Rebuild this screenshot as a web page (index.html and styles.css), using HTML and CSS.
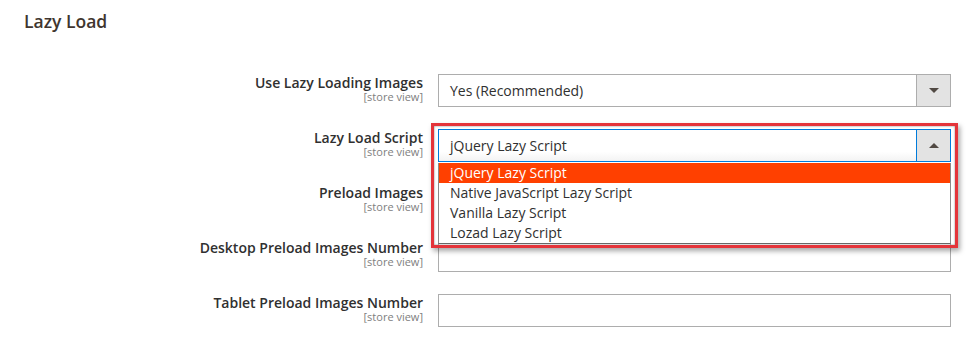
FILE: index.html
```html
<!DOCTYPE html>
<html lang="en">
<head>
  <meta charset="UTF-8">
  <title>Lazy Load</title>
  <link rel="stylesheet" href="styles.css">
</head>
<body>
  <div class="section">
    <h2 class="section-title">Lazy Load</h2>

    <div class="fields">
      <div class="field">
        <div class="label">
          <span class="name">Use Lazy Loading Images</span>
          <span class="scope">[store view]</span>
        </div>
        <div class="control">
          <div class="select">
            <span class="value">Yes (Recommended)</span>
            <span class="arrow"><i class="tri down"></i></span>
          </div>
        </div>
      </div>

      <div class="field">
        <div class="label">
          <span class="name">Lazy Load Script</span>
          <span class="scope">[store view]</span>
        </div>
        <div class="control open">
          <div class="select focus">
            <span class="value">jQuery Lazy Script</span>
            <span class="arrow"><i class="tri up"></i></span>
          </div>
          <ul class="options">
            <li class="active">jQuery Lazy Script</li>
            <li>Native JavaScript Lazy Script</li>
            <li>Vanilla Lazy Script</li>
            <li>Lozad Lazy Script</li>
          </ul>
          <div class="highlight"></div>
        </div>
      </div>

      <div class="field">
        <div class="label">
          <span class="name">Preload Images</span>
          <span class="scope">[store view]</span>
        </div>
        <div class="control">
          <!-- hidden under the open list -->
          <div class="select">
            <span class="value"></span>
            <span class="arrow"><i class="tri down"></i></span>
          </div>
        </div>
      </div>

      <div class="field">
        <div class="label">
          <span class="name">Desktop Preload Images Number</span>
          <span class="scope">[store view]</span>
        </div>
        <div class="control">
          <div class="input"></div>
        </div>
      </div>

      <div class="field">
        <div class="label">
          <span class="name">Tablet Preload Images Number</span>
          <span class="scope">[store view]</span>
        </div>
        <div class="control">
          <div class="input"></div>
        </div>
      </div>
    </div>
  </div>
</body>
</html>
```

FILE: styles.css
```css
body {
  margin: 0;
  background: #fff;
  color: #303030;
  font-family: "Open Sans", "Liberation Sans", sans-serif;
}
.section {
  padding: 10px 0 0 24px;
}
.section-title {
  margin: 0 0 41px;
  font-size: 17.5px;
  font-weight: 600;
  line-height: 23px;
  color: #41362f;
}
.field {
  display: grid;
  grid-template-columns: 399px 513px;
  column-gap: 15px;
  margin-bottom: 22px;
}
.label {
  display: flex;
  flex-direction: column;
  align-items: flex-end;
  padding-top: 1px;
  text-align: right;
}
.label .name {
  font-size: 14px;
  font-weight: 600;
  line-height: 16px;
  color: #303030;
}
.label .scope {
  font-size: 11px;
  line-height: 12px;
  color: #808080;
}
.control {
  position: relative;
}
.select,
.input {
  box-sizing: border-box;
  height: 33px;
  border: 1px solid #adadad;
  background: #fff;
}
.select {
  display: flex;
  align-items: center;
}
.select .value {
  flex: 1;
  padding-left: 11px;
  font-size: 14px;
  line-height: 19px;
}
.select .arrow {
  width: 33px;
  height: 100%;
  border-left: 1px solid #adadad;
  background: #e3e3e3;
  display: flex;
  align-items: center;
  justify-content: center;
}
.select.focus {
  border-color: #007bdb;
  background: linear-gradient(#fff 70%, #f3f3f3);
}
.select.focus .arrow {
  border-left-color: #007bdb;
}
.tri {
  width: 0;
  height: 0;
  border-left: 5px solid transparent;
  border-right: 5px solid transparent;
}
.tri.down {
  border-top: 5px solid #514943;
}
.tri.up {
  border-bottom: 5px solid #514943;
}
.options {
  position: absolute;
  top: 34px;
  left: 0;
  right: 0;
  z-index: 2;
  margin: 0;
  padding: 0;
  list-style: none;
  background: #fff;
  border: 1px solid #8a8a8a;
  border-top: none;
  border-bottom-color: #6a6a6a;
}
.options li {
  height: 20px;
  padding-left: 11px;
  font-size: 14px;
  line-height: 20px;
  color: #303030;
}
.options li.active {
  background: #ff4000;
  color: #fff;
}
.highlight {
  position: absolute;
  top: -6px;
  left: -7px;
  right: -7px;
  height: 125px;
  z-index: 3;
  box-sizing: border-box;
  border: 3px solid #e4343a;
  box-shadow: 2px 3px 5px rgba(0, 0, 0, 0.35), inset 0 0 2px rgba(0, 0, 0, 0.55);
}
```
